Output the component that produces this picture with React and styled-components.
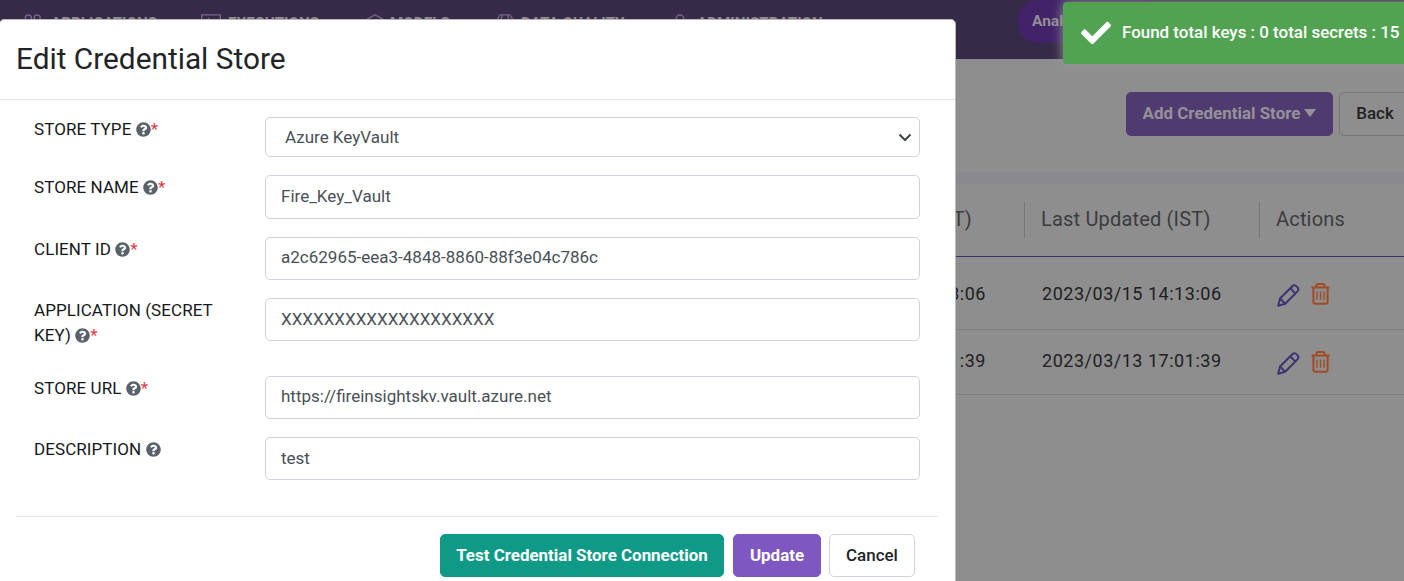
import React from 'react';
import styled, { createGlobalStyle } from 'styled-components';
import { FaCheck, FaQuestionCircle } from 'react-icons/fa';

const GlobalStyle = createGlobalStyle`
  * { box-sizing: border-box; }
  body { margin: 0; overflow: hidden; font-family: Roboto, "Liberation Sans", sans-serif; }
`;

const Screen = styled.div`
  position: relative;
  width: 1404px;
  height: 581px;
  overflow: hidden;
  background: #8e8e8e;
  color: #2b2b2e;
`;

const TopBar = styled.header`
  display: flex;
  align-items: flex-start;
  height: 59px;
  background: #362a49;
`;

const Nav = styled.nav`
  display: flex;
  width: 1017px;
  padding: 14px 0 0 24px;
`;

const NavItem = styled.div`
  display: flex;
  flex: none;
  gap: ${(p) => p.$gap}px;
  width: ${(p) => p.$width}px;
  color: #928d8f;
  font-size: 15.2px;
  font-weight: 700;
  line-height: 18px;
  white-space: nowrap;
  svg { flex: none; color: #76618a; }
`;

const ProductTag = styled.div`
  width: 150px;
  height: 43px;
  padding-left: 15px;
  border-radius: 22px;
  background: #42236a;
  color: #928e96;
  font-size: 15.5px;
  font-weight: 700;
  line-height: 42px;
`;

const ActionBar = styled.div`
  display: flex;
  gap: 6px;
  height: 113px;
  padding: 33px 0 0 1126px;
`;

const Button = styled.button`
  display: flex;
  flex: none;
  align-items: center;
  justify-content: center;
  width: ${(p) => p.$width}px;
  height: ${(p) => p.$height || 43}px;
  padding: 0 0 2px;
  border: 1px solid ${(p) => p.$border || p.$bg};
  border-radius: 5px;
  background: ${(p) => p.$bg};
  color: ${(p) => p.$color || '#fff'};
  font: ${(p) => p.$weight || 700} 16.95px Roboto, sans-serif;
  white-space: nowrap;
`;

const Caret = styled.span`
  margin-left: 4px;
  border: 6px solid transparent;
  border-top: 8px solid currentColor;
  border-bottom: 0;
`;

const Table = styled.section`
  border-top: 12px solid #8a898f;
`;

const TableRow = styled.div`
  display: grid;
  grid-template-columns: 1024px 235px 145px;
  align-items: center;
  height: ${(p) => p.$height}px;
  border-bottom: 1px solid ${(p) => (p.$head ? '#3b3268' : '#7d7e80')};
  font-size: ${(p) => (p.$head ? 20 : 18)}px;
  letter-spacing: ${(p) => (p.$head ? 0.18 : 0.52)}px;
  color: ${(p) => (p.$head ? '#3b3c3f' : '#202021')};
`;

const Cell = styled.div`
  display: flex;
  align-items: center;
  justify-content: ${(p) => (p.$end ? 'flex-end' : 'flex-start')};
  gap: 11px;
  height: 36px;
  padding: 0 ${(p) => p.$end || 0}px ${(p) => p.$lift || 0}px ${(p) => (p.$divider ? 16 : 17)}px;
  border-left: 1px solid ${(p) => (p.$divider ? '#77787a' : 'transparent')};
  white-space: nowrap;
  svg { flex: none; margin-top: 2px; }
  svg:first-child { margin-top: 5px; }
`;

const Toast = styled.div`
  position: absolute;
  top: 2px;
  left: 1063px;
  display: flex;
  align-items: center;
  gap: 11px;
  width: 360px;
  height: 62px;
  padding-left: 18px;
  border-radius: 4px;
  background: #51a351;
  box-shadow: 0 0 12px #999;
  color: #fff;
  font-size: 16.95px;
  font-weight: 500;
  white-space: nowrap;
  span { padding-bottom: 2px; }
`;

const Modal = styled.div`
  position: absolute;
  top: 19px;
  left: -1px;
  width: 957px;
  height: 600px;
  border: 1px solid #b9b9bb;
  border-radius: 5px;
  background: #fff;
`;

const ModalHeader = styled.h1`
  height: 80px;
  margin: 0;
  padding: 0 16px;
  border-bottom: 1px solid #e9e9eb;
  color: #212427;
  font-size: 29.8px;
  font-weight: 400;
  line-height: 78px;
`;

const Form = styled.form`
  height: 416px;
  padding: 17px 35px 0 34px;
`;

const Field = styled.div`
  display: grid;
  grid-template-columns: 231px 655px;
  align-items: start;
  height: ${(p) => p.$height}px;
`;

const Label = styled.label`
  width: 200px;
  color: #15181b;
  font-size: 17px;
  font-weight: 400;
  letter-spacing: 0.08px;
  line-height: 25px;
  svg { width: 15px; height: 15px; vertical-align: -2px; color: #59626b; }
`;

const Required = styled.span`
  color: #e13a4b;
`;

const Input = styled.input`
  width: 100%;
  height: ${(p) => p.$height || 43}px;
  margin: 0;
  padding: 0 15px ${(p) => p.$lift || 2}px;
  border: 1px solid #ced4da;
  border-radius: 5px;
  background: #fff;
  color: #495057;
  outline: 0;
  font: 400 17.03px Roboto, sans-serif;
`;

const Select = styled.div`
  display: flex;
  align-items: center;
  justify-content: space-between;
  height: 40px;
  padding: 0 7px 0 19px;
  border: 1px solid #ced4da;
  border-radius: 5px;
  color: #495057;
  font-size: 17.03px;
`;

const Footer = styled.footer`
  display: flex;
  justify-content: flex-end;
  gap: 8px;
  width: 922px;
  margin-left: 16px;
  padding: 17px 23px 0 0;
  border-top: 1px solid #e9e9eb;
  button:first-child { margin-right: 1px; }
`;

const stroke = { fill: 'none', stroke: 'currentColor', strokeWidth: 1.4 };

const AppsIcon = () => (
  <svg width="18" height="18" viewBox="0 0 18 18" {...stroke}>
    <circle cx="4.3" cy="4" r="3" /><circle cx="13.2" cy="4" r="3" />
    <circle cx="4.3" cy="13" r="3" /><circle cx="13.2" cy="13" r="3" />
  </svg>
);
const ExecIcon = () => (
  <svg width="20" height="18" viewBox="0 0 20 18" {...stroke}>
    <path d="M.7.9h18.6v14H.7zM7 4l4 3-4 3" />
  </svg>
);
const ModelIcon = () => (
  <svg width="18" height="18" viewBox="0 0 18 18" {...stroke}>
    <path d="m9 .9 7.5 4v8L9 17l-7.500-4V5z" />
  </svg>
);
const QualityIcon = () => (
  <svg width="18" height="18" viewBox="0 0 18 18" {...stroke}>
    <path d="M4 .9h10l3 5-8 11-8-11zM6.500 1 5 6l4 10 4-10-1.500-5M1 6h16" />
  </svg>
);
const AdminIcon = () => (
  <svg width="14" height="18" viewBox="0 0 14 18" {...stroke}>
    <circle cx="6" cy="5" r="4" /><path d="M1 17v-3c0-3 10-3 10 0v3" />
  </svg>
);
const PencilIcon = () => (
  <svg width="23" height="23" viewBox="0 0 23 23" fill="none" stroke="#3b3471" strokeWidth="2" strokeLinejoin="round">
    <path d="M1.200 21.800 3 14.500 15.300 2.200c2.600-2.600 8 2 5.200 5.200L8.200 19.800z" />
    <path d="m3 14.500 5.200 5.300M13.200 4.300l5.300 5.300" />
  </svg>
);
const TrashIcon = () => (
  <svg width="19" height="22" viewBox="0 0 19 22" fill="none" stroke="#a24a23" strokeWidth="2">
    <path d="M.5 4.600h18M5.500 4.600V2.500c0-1 .5-1.500 1.500-1.500h5c1 0 1.500.5 1.500 1.500v2.100M2.400 4.600v14.200c0 1.200.8 2 2 2h10.200c1.200 0 2-.8 2-2V4.600" />
    <path d="M6 8.500v8.300M9.500 8.500v8.300M13 8.500v8.300" strokeWidth="1.4" />
  </svg>
);
const Chevron = () => (
  <svg width="14" height="10" viewBox="0 0 14 10" fill="none" stroke="#41464c" strokeWidth="2">
    <path d="m1.500 2.500 5.500 5.500L12.500 2.500" />
  </svg>
);

const navItems = [
  { text: 'APPLICATIONS', Icon: AppsIcon, width: 177, gap: 9 },
  { text: 'EXECUTIONS', Icon: ExecIcon, width: 165, gap: 7 },
  { text: 'MODELS', Icon: ModelIcon, width: 130, gap: 6 },
  { text: 'DATA QUALITY', Icon: QualityIcon, width: 178, gap: 7 },
  { text: 'ADMINISTRATION', Icon: AdminIcon, width: 160, gap: 9 },
];

const rows = [
  { created: '2023/03/15 14:13:06', updated: '2023/03/15 14:13:06', height: 73, lift: 0, iconLift: 0 },
  { created: '2023/03/13 17:01:39', updated: '2023/03/13 17:01:39', height: 65, lift: 3, iconLift: 2 },
];

const fields = [
  { label: 'STORE NAME', value: 'Fire_Key_Vault', height: 62, inputHeight: 44, required: true },
  { label: 'CLIENT ID', value: 'a2c62965-eea3-4848-8860-88f3e04c786c', height: 61, lift: 4, required: true },
  { label: 'APPLICATION (SECRET KEY)', value: 'XXXXXXXXXXXXXXXXXXXX', height: 78, required: true },
  { label: 'STORE URL', value: 'https://fireinsightskv.vault.azure.net', height: 61, lift: 4, required: true },
  { label: 'DESCRIPTION', value: 'test', height: 43 },
];

const FieldLabel = ({ text, required }) => (
  <Label>
    {text} <FaQuestionCircle />{required && <Required>*</Required>}
  </Label>
);

export default function App() {
  return (
    <Screen>
      <GlobalStyle />
      <TopBar>
        <Nav>
          {navItems.map(({ text, Icon, width, gap }) => (
            <NavItem key={text} $width={width} $gap={gap}><Icon />{text}</NavItem>
          ))}
        </Nav>
        <ProductTag>Analytics</ProductTag>
      </TopBar>
      <ActionBar>
        <Button $width={207} $height={44} $bg="#503b71" $color="#959198">Add Credential Store<Caret /></Button>
        <Button $width={72} $height={44} $bg="#8e8e8e" $border="#747679" $color="#202124" $weight={500}>Back</Button>
      </ActionBar>
      <Table>
        <TableRow $head $height={73}>
          <Cell $end={52} $lift={2}>Created (IST)</Cell>
          <Cell $divider $lift={2}>Last Updated (IST)</Cell>
          <Cell $divider $lift={2}>Actions</Cell>
        </TableRow>
        {rows.map((r) => (
          <TableRow key={r.updated} $height={r.height}>
            <Cell $end={38} $lift={r.lift}>{r.created}</Cell>
            <Cell $lift={r.lift}>{r.updated}</Cell>
            <Cell $lift={r.iconLift}><PencilIcon /><TrashIcon /></Cell>
          </TableRow>
        ))}
      </Table>
      <Modal>
        <ModalHeader>Edit Credential Store</ModalHeader>
        <Form>
          <Field $height={58}>
            <FieldLabel text="STORE TYPE" required />
            <Select>Azure KeyVault<Chevron /></Select>
          </Field>
          {fields.map((f) => (
            <Field key={f.label} $height={f.height}>
              <FieldLabel text={f.label} required={f.required} />
              <Input $height={f.inputHeight} $lift={f.lift} defaultValue={f.value} />
            </Field>
          ))}
        </Form>
        <Footer>
          <Button $width={284} $bg="#0e9a86">Test Credential Store Connection</Button>
          <Button $width={88} $bg="#7e57c0">Update</Button>
          <Button $width={86} $bg="#fff" $border="#ced4da" $color="#212427" $weight={500}>Cancel</Button>
        </Footer>
      </Modal>
      <Toast>
        <FaCheck size={30} />
        <span>Found total keys : 0 total secrets : 15</span>
      </Toast>
    </Screen>
  );
}
